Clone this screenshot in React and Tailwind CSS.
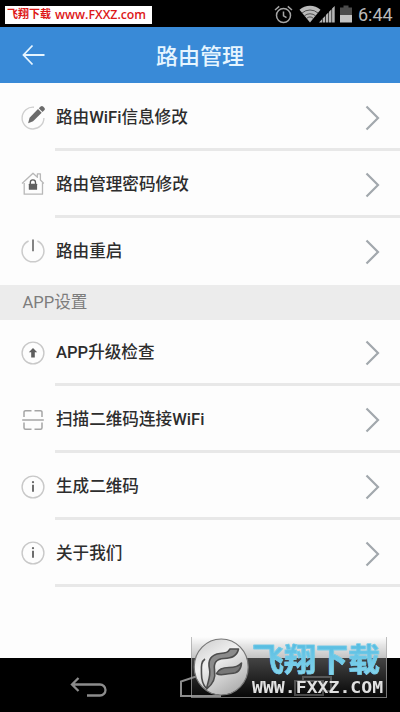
import React from 'react';

const ICON = 'h-6 w-6 shrink-0';

const PencilIcon = () => (
  <svg className={ICON} viewBox="0 0 24 24" fill="none">
    <path d="M13 1.200A10.900 10.900 0 1 0 22.900 12" stroke="#cfcfcf" strokeWidth="1.400" />
    <path d="M17.800 2.200L19.600.6a1.900 1.900 0 0 1 2.500 0l1.200 1.200a1.800 1.800 0 0 1 0 2.500l-1.800 1.600z" fill="#6b6b6b" />
    <path d="M17 3l3.700 3.700-8.600 8.500-5 2 1.500-5.500z" fill="#6b6b6b" />
  </svg>
);

const HomeLockIcon = () => (
  <svg className={ICON} viewBox="0 0 24 24" fill="none">
    <path
      d="M3.200 11v11.200h18.300V11M1 11.500L12 1.200l4.400 4V1.800h3v6.200L22.800 11.500"
      stroke="#b8b8b8"
      strokeWidth="1.300"
      strokeLinejoin="round"
    />
    <path d="M9.300 12.500v-2.100a2.600 2.600 0 0 1 5.200 0v2.100" stroke="#5b5b5b" strokeWidth="1.300" />
    <rect x="7.800" y="11.700" width="8.300" height="6" rx=".5" fill="#606060" />
  </svg>
);

const PowerIcon = () => (
  <svg className={ICON} viewBox="0 0 24 24" fill="none">
    <path d="M7.600 2A10.900 10.900 0 1 0 16.400 2" stroke="#cbcbcb" strokeWidth="1.500" />
    <path d="M12 .5v11.800" stroke="#777" strokeWidth="1.800" />
  </svg>
);

const UpgradeIcon = () => (
  <svg className={ICON} viewBox="0 0 24 24" fill="none">
    <circle cx="12" cy="12" r="10.900" stroke="#c8c8c8" strokeWidth="1.400" />
    <path d="M12 7l4.200 4.300h-2.400v5.200h-3.600v-5.200H7.800z" fill="#5d5d5d" />
  </svg>
);

const ScanIcon = () => (
  <svg className={ICON} viewBox="0 0 24 24" fill="none" stroke="#a5a5a5" strokeWidth="1.500">
    <path d="M10.500 2.700h-6a1.500 1.500 0 0 0-1.500 1.500V9M13.500 2.700h6a1.500 1.500 0 0 1 1.500 1.500V9M3 14.500v5.300a1.500 1.500 0 0 0 1.500 1.500h6M21 14.500v5.300a1.500 1.500 0 0 1-1.500 1.500h-6M1.200 12h21.600" />
  </svg>
);

const InfoIcon = () => (
  <svg className={ICON} viewBox="0 0 24 24" fill="none">
    <circle cx="12" cy="12" r="10.900" stroke="#c8c8c8" strokeWidth="1.400" />
    <path d="M12 9.800v6.900" stroke="#666" strokeWidth="1.900" />
    <circle cx="12" cy="7.200" r="1.100" fill="#666" />
  </svg>
);

const routerItems = [
  { label: '路由WiFi信息修改', Icon: PencilIcon },
  { label: '路由管理密码修改', Icon: HomeLockIcon },
  { label: '路由重启', Icon: PowerIcon },
];

const appItems = [
  { label: 'APP升级检查', Icon: UpgradeIcon },
  { label: '扫描二维码连接WiFi', Icon: ScanIcon },
  { label: '生成二维码', Icon: InfoIcon },
  { label: '关于我们', Icon: InfoIcon },
];

const MenuRow = ({ label, Icon, divider = true }) => (
  <li className="flex h-[66.8px] pl-[21px]">
    <div className="flex w-[34px] items-center">
      <Icon />
    </div>
    <div
      className={`flex flex-1 items-center justify-between border-b-3 pt-1 pr-[20px] pl-px ${
        divider ? 'border-[#e8e8e8]' : 'border-transparent'
      }`}
    >
      <span className="text-[16.6px] leading-6 font-medium whitespace-nowrap text-[#2d2d2d]">{label}</span>
      <svg className="h-[26px] w-[15px]" viewBox="0 0 15 26" fill="none">
        <path d="M1.500 1.500L13 13L1.500 24.500" stroke="#a2a8ad" strokeWidth="2.200" />
      </svg>
    </div>
  </li>
);

const StatusBar = () => (
  <div className="flex h-[27px] items-start justify-between bg-black">
    <div className="mt-1.5 ml-[5px] flex h-[18px] w-[147px] items-center bg-white pl-[2px] whitespace-nowrap text-[#dd1717]">
      <span className="w-[48px] pt-px text-[11px] font-bold">飞翔下载</span>
      <span className="font-['Open_Sans'] text-[12.3px] font-semibold">www.FXXZ.com</span>
    </div>
    <div className="mr-[7px] flex h-[28px] items-center">
      <svg className="h-[19px] w-[19px]" viewBox="0 0 19 19" fill="none" stroke="#a5a5a5" strokeWidth="1.500">
        <circle cx="9.500" cy="10.500" r="7" />
        <path d="M9.500 6.500v4.300l3 1.800M1 5l4.200-3.600M18 5l-4.200-3.600" />
      </svg>
      <svg className="ml-[6px] h-[18px] w-[22px]" viewBox="0 0 22 18" fill="none">
        <path d="M.5 4.800a16 16 0 0 1 21 0L11 17.500z" fill="#bababa" />
        <path d="M3 8a12.200 12.200 0 0 1 16 0M5.300 10.900a8.700 8.700 0 0 1 11.400 0M7.500 13.500a5.200 5.200 0 0 1 7 0" stroke="#333" strokeWidth=".8" />
      </svg>
      <svg className="ml-[-2px] h-[18px] w-[16px]" viewBox="0 0 16 18" fill="#b5b5b5">
        <path d="M0 17.500L3 14.300v3.200zM3.600 13.600l2.600-2.700v6.600H3.600zM6.900 10.100l2.500-2.600v10H6.900zM10 6.800l2.500-2.600v13.300H10zM13.100 3.600l2.600-2.700v16.600h-2.600z" />
      </svg>
      <svg className="ml-[5px] h-[18px] w-[12px]" viewBox="0 0 12 18">
        <path d="M0 2.500h3.500V.5h5v2H12V10H0z" fill="#4b4b4b" />
        <path d="M0 10h12v7.500H0z" fill="#c2c2c2" />
      </svg>
      <span className="ml-[6px] w-[35px] font-[Roboto] text-[18px] text-[#b9b9b9]">6:44</span>
    </div>
  </div>
);

const NavBar = () => (
  <nav className="flex h-[54px] items-start bg-black pt-[18px] pl-[70px]">
    <svg className="h-[23px] w-[38px]" viewBox="0 0 38 23" fill="none" stroke="#8c8c8c" strokeWidth="2.300">
      <path d="M8.500 2L2 8.500L8.500 15M2 8.500H30a5.500 5.500 0 0 1 0 11H17" />
    </svg>
    <svg className="ml-[72px] h-[23px] w-[41px]" viewBox="0 0 41 23" fill="none" stroke="#8c8c8c" strokeWidth="2">
      <path d="M1 20V5.500L20.500 -1L40 5.500V20z" />
    </svg>
    <svg className="ml-[73px] h-[23px] w-[38px]" viewBox="0 0 38 23" fill="none" stroke="#444" strokeWidth="2">
      <path d="M9 5V1h28v14h-8M1 5h28v14H1z" />
    </svg>
  </nav>
);

const Watermark = () => (
  <div className="absolute top-[637px] left-[191px] flex h-[61px] w-[196px] items-start border border-t-0 border-[#a5a5a5]/70 bg-linear-to-b from-[#888]/0 via-[#888]/50 via-35% to-[#888]/5">
    <svg className="mt-px ml-px h-[58px] w-[56px] shrink-0" viewBox="0 0 56 58">
      <defs>
        <linearGradient id="disc" x1="0" y1="0" x2=".6" y2="1">
          <stop offset="0" stopColor="#c9c9c9" />
          <stop offset=".45" stopColor="#f0f0f0" />
          <stop offset="1" stopColor="#b2b2b2" />
        </linearGradient>
      </defs>
      <ellipse cx="28.200" cy="29" rx="27" ry="28" fill="url(#disc)" stroke="#777" strokeWidth="1.200" />
      <g stroke="#4d4d4d" strokeWidth="1.600" strokeLinejoin="round">
        <path
          d="M13.500 51C15 43 18 38 16.500 31C14.500 22 18 16.500 27 15.500C33 15 35 14.500 37 11H45.500C44 18 39 20 31 20.500C23 21 20.500 25 21.500 32C23 41 19 47 13.500 51Z"
          fill="#8b8b8b"
        />
        <path d="M12 21C7.500 24 8.500 30 8.500 36C8.500 42 9.500 46 13 50" fill="none" />
        <path d="M23.500 35.500C26 30.500 30 29.500 36 29.500C42 29.500 46 28 48.500 25C48 32 44 35.500 38 35.500C32 35.500 28 38.500 23.500 35.500Z" fill="#777" />
      </g>
    </svg>
    <div className="ml-[3px] flex flex-col">
      <span className="mt-[7px] h-[36px] bg-linear-to-b from-[#56bce1] to-[#8bd9ef] bg-clip-text text-[32px] leading-[33px] font-bold whitespace-nowrap text-transparent [-webkit-text-stroke:.6px_#79cfea]">
        飞翔下载
      </span>
      <span className="origin-left scale-x-[1.21] font-['DejaVu_Sans_Mono'] text-[15px] leading-[17px] font-bold whitespace-nowrap text-[#e1e1e1]">
        WWW.FXXZ.COM
      </span>
    </div>
  </div>
);

const App = () => {
  return (
    <div className="relative flex h-[712px] w-[400px] flex-col overflow-hidden bg-[#fdfdfd] font-[Roboto,'Noto_Sans_CJK_SC',sans-serif]">
      <StatusBar />

      {/* Header */}
      <header className="flex h-14 items-center bg-[#398ad7] pl-[22px] text-[#e6f5ff]">
        <svg className="h-[22px] w-[24px]" viewBox="0 0 24 22" fill="none" stroke="currentColor" strokeWidth="1.800">
          <path d="M10.500 1.500L1.500 11L10.500 20.500M1.500 11H22.500" />
        </svg>
        <h1 className="ml-[110px] pt-1 text-[22px] leading-8 font-medium">路由管理</h1>
      </header>

      <ul className="pt-[1.2px]">
        {routerItems.map((item, i) => (
          <MenuRow key={item.label} {...item} divider={i < routerItems.length - 1} />
        ))}
      </ul>
      <h2 className="h-[35px] shrink-0 bg-[#ececec] pl-[22.5px] text-[16.6px] leading-[36px] text-[#7d7d7d]">
        APP设置
      </h2>
      <ul className="flex-1">
        {appItems.map((item) => (
          <MenuRow key={item.label} {...item} />
        ))}
      </ul>

      <NavBar />
      <Watermark />
    </div>
  );
};

export default App;
